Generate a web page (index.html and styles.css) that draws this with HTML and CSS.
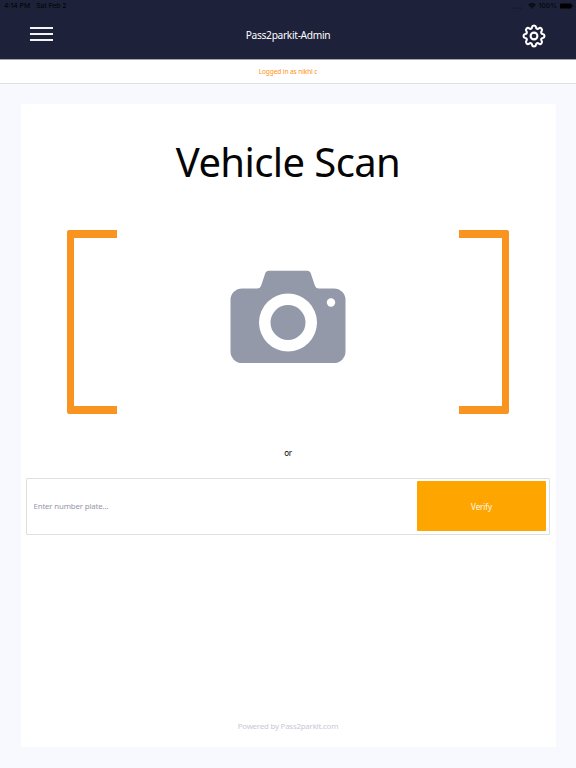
FILE: index.html
```html
<!DOCTYPE html>
<html lang="en">
<head>
    <meta charset="UTF-8">
    <meta name="viewport" content="width=device-width, initial-scale=1.0">
    <title>Pass2parkit-Admin</title>
    <link rel="stylesheet" href="styles.css">
</head>
<body>
    <header class="header">
        <div class="status-bar">
            <span class="status-time">4:14 PM</span>
            <span class="status-date">Sat Feb 2</span>
            <svg class="status-icons" width="18" height="12" viewBox="0 0 18 12">
                <g fill="#0c0e18">
                    <circle cx="5" cy="8" r=".55"/><circle cx="7.600" cy="8" r=".55"/>
                    <circle cx="10.200" cy="8" r=".55"/><circle cx="12.800" cy="8" r=".55"/>
                </g>
            </svg>
            <svg class="wifi" width="8" height="6" viewBox="0 0 8 6">
                <path d="M.6 2.2Q4-.8 7.4 2.2M2 3.7Q4 2 6 3.7" fill="none" stroke="#05060a" stroke-width="1.3"/>
                <path d="M4 5.8L2.9 4.7Q4 3.9 5.1 4.7Z" fill="#05060a"/>
            </svg>
            <span class="status-percent">100%</span>
            <svg class="battery" width="14" height="6" viewBox="0 0 14 6">
                <rect x="0" y=".4" width="11.700" height="5.200" rx="1.100" fill="#000"/>
                <path d="M12.500 2v2q1-.2 1-1t-1-1z" fill="#05060a"/>
            </svg>
        </div>
        <div class="nav">
            <button class="menu" aria-label="Menu"><span></span><span></span><span></span></button>
            <h1>Pass2parkit-Admin</h1>
            <button class="settings" aria-label="Settings">
                <svg width="24" height="24" viewBox="-12 -12 24 24" fill="none" stroke="#fff" stroke-width="2.100" stroke-linejoin="round">
                    <circle r="3.400"/>
                    <path d="M8.770-2.020A2.050 2.050 0 0 1 8.770 2.020A1.600 1.600 0 0 0 7.630 4.770A2.050 2.050 0 0 1 4.770 7.630A1.600 1.600 0 0 0 2.020 8.770A2.050 2.050 0 0 1-2.020 8.770A1.600 1.600 0 0 0-4.770 7.630A2.050 2.050 0 0 1-7.630 4.770A1.600 1.600 0 0 0-8.770 2.020A2.050 2.050 0 0 1-8.770-2.020A1.600 1.600 0 0 0-7.630-4.770A2.050 2.050 0 0 1-4.770-7.630A1.600 1.600 0 0 0-2.020-8.770A2.050 2.050 0 0 1 2.020-8.770A1.600 1.600 0 0 0 4.770-7.630A2.050 2.050 0 0 1 7.630-4.770A1.600 1.600 0 0 0 8.770-2.020Z"/>
                </svg>
            </button>
        </div>
    </header>
    <div class="login-info">Logged in as nikhi c</div>

    <main class="card">
        <h2>Vehicle Scan</h2>
        <div class="scanner">
            <div class="bracket bracket-left"></div>
            <svg class="camera" width="116" height="94" viewBox="0 0 116 94">
                <path fill="#9399a8" d="M12 18.500H27Q30 18.500 31 16L35 4Q36 .7 39 .7H77Q80 .7 81 4L85 16Q86 18.500 89 18.500H104A11.500 11.500 0 0 1 115.500 30V81.500A11.500 11.500 0 0 1 104 93H12A11.500 11.500 0 0 1 .5 81.500V30A11.500 11.500 0 0 1 12 18.500Z"/>
                <circle cx="58" cy="52.500" r="29" fill="#fff"/>
                <circle cx="58" cy="52.500" r="17.500" fill="#9399a8"/>
                <circle cx="101" cy="32.500" r="4.200" fill="#fff"/>
            </svg>
            <div class="bracket bracket-right"></div>
        </div>
        <p class="or">or</p>
        <form class="plate-form">
            <input type="text" class="plate" placeholder="Enter number plate...">
            <button type="button" class="verify">Verify</button>
        </form>
        <footer class="powered">Powered by Pass2parkit.com</footer>
    </main>
</body>
</html>
```
FILE: styles.css
```css
* { box-sizing: border-box; }
body { margin: 0; height: 768px; overflow: hidden; background-color: #f8f9fe; font-family: "Noto Sans", sans-serif; }
h1, h2, p { margin: 0; font-weight: normal; }
button { padding: 0; border: 0; background: none; }
svg { display: block; }

.header { height: 60px; background-color: #1e213a; border-bottom: 1px solid #a2a8b1; color: white; }
.status-bar { display: flex; align-items: center; height: 12px; padding: 0 2px 0 4px; color: #05060a; font: 500 6.8px/12px Inter, sans-serif; }
.status-date { margin-left: 6px; }
.status-icons { margin-left: auto; }
.wifi { margin: 0 3px 0 2px; }
.status-percent { margin-right: 3px; }

.nav { display: grid; grid-template-columns: 24px 1fr 24px; align-items: center; height: 47px; padding: 0 30px; }
.nav h1 { text-align: center; font-size: 10.2px; line-height: 14px; letter-spacing: -0.32px; margin-top: -2px; }
.menu { display: flex; flex-direction: column; gap: 4px; margin-top: -4px; }
.menu span { width: 23px; height: 2px; background-color: #f4f4f8; }
.login-info { height: 24px; border-bottom: 1px solid #dedfe4; background-color: white; color: #ff9216; text-align: center; font-size: 6.6px; line-height: 23px; letter-spacing: -0.12px; }

.card { display: flex; flex-direction: column; height: 643px; margin: 20px 20px 0 21px; padding: 0 6px 0 5px; background-color: white; }
.card h2 { padding-top: 30px; text-align: center; font-size: 40px; line-height: 56px; letter-spacing: -0.6px; color: #050505; }
.scanner { display: flex; align-items: center; justify-content: space-between; height: 184px; margin: 40px 41px 0 41px; }
.bracket { width: 50px; height: 184px; border: 8px solid #f8941f; }
.bracket-left { border-left-width: 7px; border-right: 0; border-radius: 3px 0 0 3px; }
.bracket-right { border-right-width: 7px; border-left: 0; border-radius: 0 3px 3px 0; }
.camera { margin-top: -11px; }
.or { margin-top: 32px; text-align: center; font-size: 8px; line-height: 14px; letter-spacing: -0.2px; color: #000; }
.plate-form { display: flex; height: 57px; margin-top: 18px; padding: 2px 3px 3px; border: 1px solid #dfdfdf; border-radius: 1px; }
.plate { flex: 1; min-width: 0; padding: 0 3.5px; border: 0; outline: 0; font: 7.8px "Noto Sans", sans-serif; letter-spacing: -0.13px; }
.plate::placeholder { color: #9497aa; }
.verify { width: 129px; border-radius: 1px; background-color: #ffa500; color: #fffaf0; font: 8px "Noto Sans", sans-serif; letter-spacing: -0.1px; }
.powered { margin-top: auto; padding-bottom: 14px; text-align: center; color: #c8c8d8; font-size: 7.8px; line-height: 14px; letter-spacing: -0.17px; }
```
